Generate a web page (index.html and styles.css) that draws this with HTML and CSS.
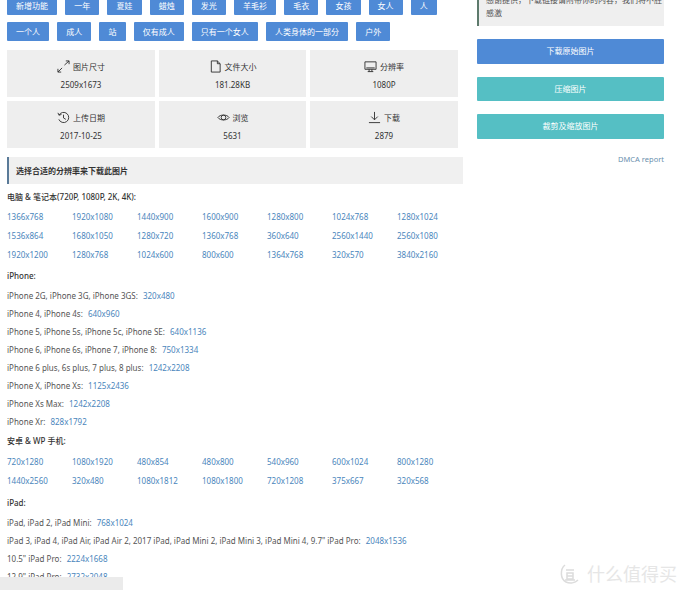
FILE: index.html
```html
<!DOCTYPE html>
<html lang="zh">
<head>
<meta charset="utf-8">
<title>选择合适的分辨率来下载此图片</title>
<link rel="stylesheet" href="styles.css">
</head>
<body>
<div class="page">
  <main class="main">
    <div class="tags">
      <a class="tag">新增功能</a><a class="tag">一年</a><a class="tag">夏娃</a><a class="tag">蜡烛</a><a class="tag">发光</a><a class="tag">羊毛衫</a><a class="tag">毛衣</a><a class="tag">女孩</a><a class="tag">女人</a><a class="tag">人</a>
      <a class="tag">一个人</a><a class="tag">成人</a><a class="tag">站</a><a class="tag">仅有成人</a><a class="tag">只有一个女人</a><a class="tag">人类身体的一部分</a><a class="tag">户外</a>
    </div>
    <div class="stats">
      <div class="stat"><div class="stat-title"><svg class="ico" viewBox="0 0 14 14"><path d="M1 13 5.500 8.500M1 9.500V13H4.500M8 5.500 13 1M9.500 1H13V4.500"/></svg>图片尺寸</div><div>2509x1673</div></div>
      <div class="stat"><div class="stat-title"><svg class="ico" viewBox="0 0 14 14"><path d="M2.500 1H9L12 4V13H2.500ZM9 1V4H12"/></svg>文件大小</div><div>181.28KB</div></div>
      <div class="stat"><div class="stat-title"><svg class="ico" viewBox="0 0 14 14"><path d="M1 2H13V10H1ZM2.500 8.500H11.500M5.500 10V12.500M8.500 10V12.500M4 12.500H10"/></svg>分辨率</div><div>1080P</div></div>
      <div class="stat"><div class="stat-title"><svg class="ico" viewBox="0 0 14 14"><path d="M2.200 4.500A5.500 5.500 0 1 1 2 9M1 2 2.200 4.500 4.800 3.700M7 4V7.500L9.500 9"/></svg>上传日期</div><div>2017-10-25</div></div>
      <div class="stat"><div class="stat-title"><svg class="ico" viewBox="0 0 14 14"><path d="M1 7C3 3.500 11 3.500 13 7C11 10.500 3 10.500 1 7Z"/><circle cx="7" cy="7" r="2.500"/></svg>浏览</div><div>5631</div></div>
      <div class="stat"><div class="stat-title"><svg class="ico" viewBox="0 0 14 14"><path d="M7 1V9.500M3.500 6 7 9.500 10.500 6M1 12.500H13"/></svg>下载</div><div>2879</div></div>
    </div>
    <h2 class="section-head">选择合适的分辨率来下载此图片</h2>

    <h3 class="group">电脑 &amp; 笔记本(720P, 1080P, 2K, 4K):</h3>
    <div class="res-grid">
      <a>1366x768</a><a>1920x1080</a><a>1440x900</a><a>1600x900</a><a>1280x800</a><a>1024x768</a><a>1280x1024</a>
      <a>1536x864</a><a>1680x1050</a><a>1280x720</a><a>1360x768</a><a>360x640</a><a>2560x1440</a><a>2560x1080</a>
      <a>1920x1200</a><a>1280x768</a><a>1024x600</a><a>800x600</a><a>1364x768</a><a>320x570</a><a>3840x2160</a>
    </div>

    <h3 class="group">iPhone:</h3>
    <div class="dev-list">
      <p>iPhone 2G, iPhone 3G, iPhone 3GS: <a>320x480</a></p>
      <p>iPhone 4, iPhone 4s: <a>640x960</a></p>
      <p>iPhone 5, iPhone 5s, iPhone 5c, iPhone SE: <a>640x1136</a></p>
      <p>iPhone 6, iPhone 6s, iPhone 7, iPhone 8: <a>750x1334</a></p>
      <p>iPhone 6 plus, 6s plus, 7 plus, 8 plus: <a>1242x2208</a></p>
      <p>iPhone X, iPhone Xs: <a>1125x2436</a></p>
      <p>iPhone Xs Max: <a>1242x2208</a></p>
      <p>iPhone Xr: <a>828x1792</a></p>
    </div>

    <h3 class="group">安卓 &amp; WP 手机:</h3>
    <div class="res-grid res-grid-android">
      <a>720x1280</a><a>1080x1920</a><a>480x854</a><a>480x800</a><a>540x960</a><a>600x1024</a><a>800x1280</a>
      <a>1440x2560</a><a>320x480</a><a>1080x1812</a><a>1080x1800</a><a>720x1208</a><a>375x667</a><a>320x568</a>
    </div>

    <h3 class="group">iPad:</h3>
    <div class="dev-list">
      <p>iPad, iPad 2, iPad Mini: <a>768x1024</a></p>
      <p>iPad 3, iPad 4, iPad Air, iPad Air 2, 2017 iPad, iPad Mini 2, iPad Mini 3, iPad Mini 4, 9.7" iPad Pro: <a>2048x1536</a></p>
      <p>10.5" iPad Pro: <a>2224x1668</a></p>
      <p>12.9" iPad Pro: <a>2732x2048</a></p>
    </div>
  </main>
  <aside class="side">
    <div class="notice">感谢提供，下载链接请附带你的内容，我们将不胜<br>感激</div>
    <a class="btn btn-blue">下载原始图片</a>
    <a class="btn btn-teal">压缩图片</a>
    <a class="btn btn-teal">裁剪及缩放图片</a>
    <a class="dmca">DMCA report</a>
  </aside>
</div>
<div class="corner-bar"></div>
<div class="watermark"><svg class="wm-logo" viewBox="0 0 24 24"><path d="M7 3C2 7 2 17 8 20C12 22 17 21 20 18"/><path d="M8 8H16M9 11H15V17H9ZM9 14H15M7 18H17"/></svg><span>什么值得买</span></div>
</body>
</html>
```
FILE: styles.css
```css
html, body {
  margin: 0;
  height: 590px;
  overflow: hidden;
  background: #fff;
}
body {
  font: 8px/12px "Noto Sans", "Noto Sans CJK SC", sans-serif;
  color: #555;
}
a { color: inherit; text-decoration: none; }
.page {
  display: flex;
  gap: 14px;
  margin-top: -4px;
  padding-left: 7px;
}
.main { width: 456px; flex: none; }
.tags {
  display: flex;
  flex-wrap: wrap;
  gap: 7px 8px;
  height: 45px;
  align-content: flex-start;
  width: 445px;
}
.tag {
  height: 19px;
  padding: 0 9.100px;
  line-height: 19px;
  background: #4f8ad6;
  color: #fff;
  border-radius: 1px;
}
.stats {
  display: grid;
  grid-template-columns: 148px 147px 148px;
  grid-auto-rows: 47px;
  gap: 4px;
  margin-top: 9px;
  width: 451px;
}
.stat {
  background: #eee;
  display: flex;
  flex-direction: column;
  align-items: center;
  gap: 6px;
  padding-top: 10px;
  box-sizing: border-box;
  color: #333;
  text-align: center;
}
.stat-title {
  display: flex;
  align-items: center;
  gap: 3px;
  height: 13px;
}
.ico {
  width: 13px;
  height: 13px;
  fill: none;
  stroke: #333;
  stroke-width: 1;
}
.section-head {
  margin: 9px 0 0;
  height: 27px;
  box-sizing: border-box;
  background: #f0f0f0;
  border-left: 2px solid #5a7a98;
  padding-left: 7px;
  font-size: 8px;
  font-weight: 700;
  line-height: 27px;
  color: #333;
}
.group {
  margin: 7px 0 0;
  height: 12px;
  font-size: 8px;
  font-weight: 500;
  line-height: 12px;
  color: #333;
}
.res-grid {
  display: grid;
  grid-template-columns: repeat(7, 65px);
  grid-auto-rows: 12px;
  row-gap: 7px;
  margin: 8px 0 9px;
  color: #4a86bc;
}
.res-grid-android { margin: 9px 0 10px; }
.dev-list { margin: 8px 0 0; }
.dev-list p { margin: 0 0 6px; height: 12px; white-space: nowrap; }
.dev-list a { color: #4a86bc; margin-left: 3px; }
.side { width: 187px; flex: none; display: flex; flex-direction: column; }
.notice {
  height: 33px;
  margin-top: -3px;
  box-sizing: border-box;
  background: #efefef;
  border-left: 2px solid #5d7a6c;
  padding: 0 0 0 7px;
  color: #555;
  line-height: 13px;
  white-space: nowrap;
  overflow: hidden;
  margin-bottom: 13px;
}
.btn {
  height: 24.500px;
  margin-bottom: 13px;
  line-height: 24.500px;
  text-align: center;
  color: #fff;
  border-radius: 1px;
}
.btn-blue { background: #4f8ad6; }
.btn-teal { background: #55bfc4; }
.dmca {
  align-self: flex-end;
  margin-top: 1px;
  font-size: 7.500px;
  color: #6a8fae;
}
.corner-bar {
  position: absolute;
  left: 0;
  top: 577px;
  width: 123px;
  height: 13px;
  background: #ebebeb;
}
.watermark {
  position: absolute;
  left: 558px;
  top: 562px;
  display: flex;
  align-items: center;
  gap: 5px;
  color: #e6e6e6;
  font-size: 18px;
  line-height: 24px;
  white-space: nowrap;
}
.wm-logo {
  width: 24px;
  height: 24px;
  fill: none;
  stroke: #dcdcdc;
  stroke-width: 1.500;
}
```
